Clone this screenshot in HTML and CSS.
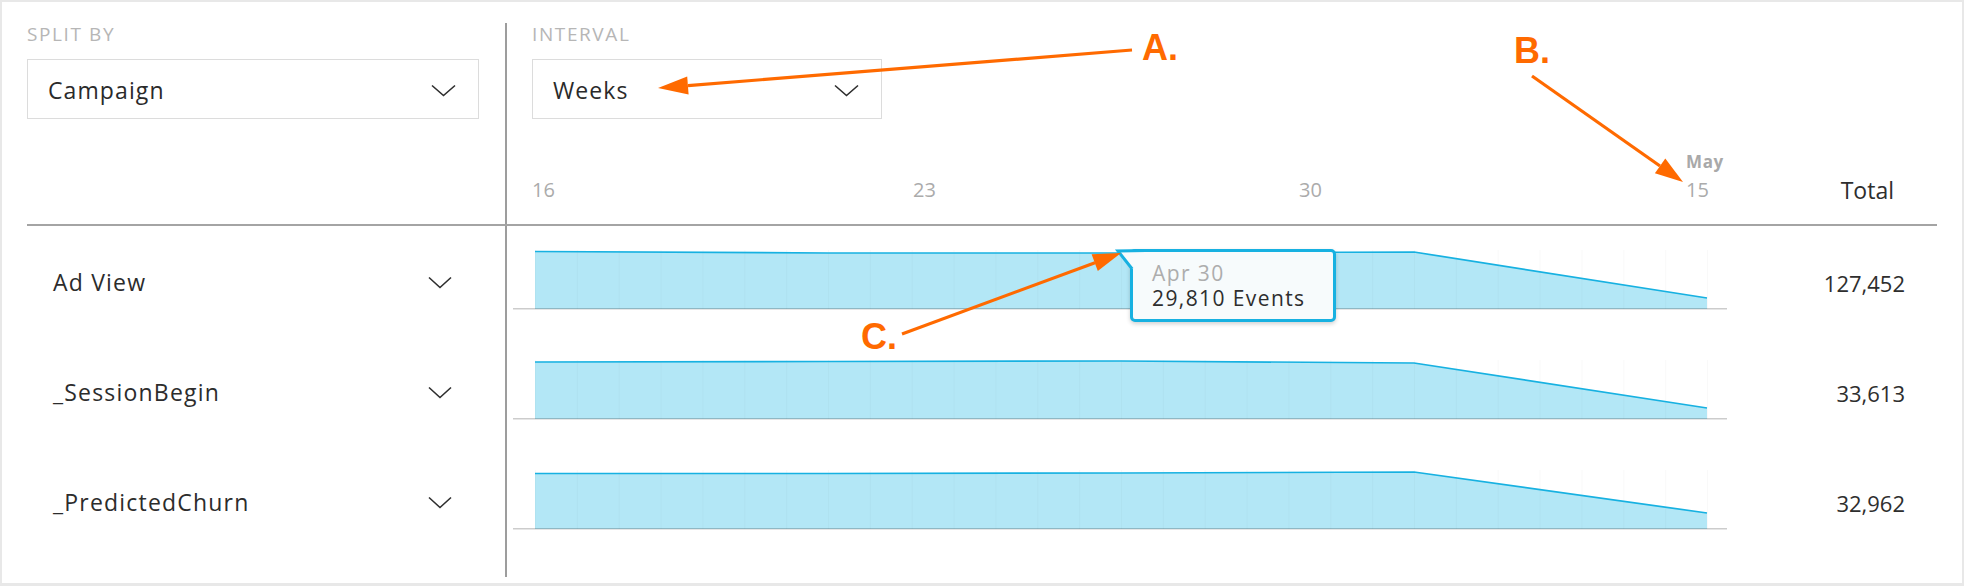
FILE: index.html
```html
<!DOCTYPE html>
<html>
<head>
<meta charset="utf-8">
<link rel="stylesheet" href="styles.css">
</head>
<body>
<div class="page">
  <div class="board">
    <div class="head">
      <div class="head-left">
        <div class="field-label">SPLIT BY</div>
        <div class="select split">
          <span>Campaign</span>
          <svg class="chev" width="25" height="13" viewBox="0 0 25 13"><polyline points="1,1.5 12.5,11.5 24,1.5"/></svg>
        </div>
      </div>
      <div class="head-right">
        <div class="field-label">INTERVAL</div>
        <div class="select interval">
          <span>Weeks</span>
          <svg class="chev" width="25" height="13" viewBox="0 0 25 13"><polyline points="1,1.5 12.5,11.5 24,1.5"/></svg>
        </div>
        <div class="axis">
          <span class="tick">16</span>
          <span class="tick">23</span>
          <span class="tick">30</span>
          <span class="tick"><span class="month">May</span>15</span>
          <span class="total-head">Total</span>
        </div>
      </div>
    </div>

    <div class="body">
      <div class="label-cell">
        <span>Ad View</span>
        <svg class="chev" width="24" height="13" viewBox="0 0 24 13"><polyline points="1,1.5 12,11.5 23,1.5"/></svg>
      </div>
      <div class="chart-cell">
        <svg class="spark" width="1214" height="60" viewBox="0 0 1214 60">
          <defs><pattern id="g1" x="22" y="0" width="41.857" height="60" patternUnits="userSpaceOnUse"><line x1="0.5" y1="0" x2="0.5" y2="60" class="grid"/></pattern></defs>
          <path class="area" d="M22,59 L22,1.5 L315,3 L608,3 L901,2 L1194,48 L1194,59 Z"/>
          <rect x="22" y="0" width="1174" height="59" fill="url(#g1)"/>
          <polyline class="line" points="22,1.5 315,3 608,3 901,2 1194,48"/>
          <line class="base" x1="0" y1="58.8" x2="1214" y2="58.8"/>
        </svg>
        <span class="total">127,452</span>
      </div>

      <div class="label-cell">
        <span>_SessionBegin</span>
        <svg class="chev" width="24" height="13" viewBox="0 0 24 13"><polyline points="1,1.5 12,11.5 23,1.5"/></svg>
      </div>
      <div class="chart-cell">
        <svg class="spark" width="1214" height="60" viewBox="0 0 1214 60">
          <defs><pattern id="g2" x="22" y="0" width="41.857" height="60" patternUnits="userSpaceOnUse"><line x1="0.5" y1="0" x2="0.5" y2="60" class="grid"/></pattern></defs>
          <path class="area" d="M22,59 L22,2 L315,1.5 L608,1 L901,3 L1194,48 L1194,59 Z"/>
          <rect x="22" y="0" width="1174" height="59" fill="url(#g2)"/>
          <polyline class="line" points="22,2 315,1.5 608,1 901,3 1194,48"/>
          <line class="base" x1="0" y1="58.8" x2="1214" y2="58.8"/>
        </svg>
        <span class="total">33,613</span>
      </div>

      <div class="label-cell">
        <span>_PredictedChurn</span>
        <svg class="chev" width="24" height="13" viewBox="0 0 24 13"><polyline points="1,1.5 12,11.5 23,1.5"/></svg>
      </div>
      <div class="chart-cell">
        <svg class="spark" width="1214" height="60" viewBox="0 0 1214 60">
          <defs><pattern id="g3" x="22" y="0" width="41.857" height="60" patternUnits="userSpaceOnUse"><line x1="0.5" y1="0" x2="0.5" y2="60" class="grid"/></pattern></defs>
          <path class="area" d="M22,59 L22,3.5 L315,3.5 L608,3 L901,2 L1194,43 L1194,59 Z"/>
          <rect x="22" y="0" width="1174" height="59" fill="url(#g3)"/>
          <polyline class="line" points="22,3.5 315,3.5 608,3 901,2 1194,43"/>
          <line class="base" x1="0" y1="58.8" x2="1214" y2="58.8"/>
        </svg>
        <span class="total">32,962</span>
      </div>

      <div class="label-cell spacer"></div>
      <div class="spacer"></div>
    </div>
  </div>

  <div class="overlay">
    <div class="tooltip">
      <div class="tip-date">Apr 30</div>
      <div class="tip-value">29,810 Events</div>
    </div>
    <svg class="notes" width="1964" height="586" viewBox="0 0 1964 586">
      <polygon class="tail-fill" points="1118.5,251.5 1146,251.5 1146,269 1132,269"/>
      <polyline class="tail-line" points="1146,250.6 1118,251 1132.2,269"/>

      <line class="arrow" x1="1132" y1="50" x2="688" y2="85.6"/>
      <polygon class="arrow-head" points="658,88 687.2,76.6 688.6,94.6"/>
      <line class="arrow" x1="1532" y1="76" x2="1660" y2="166"/>
      <polygon class="arrow-head" points="1683,182 1654.9,173.3 1665.3,158.5"/>
      <line class="arrow" x1="902" y1="334" x2="1095" y2="262.7"/>
      <polygon class="arrow-head" points="1121,253 1097.8,271.1 1091.6,254.3"/>

      <text class="note" x="1142" y="60">A.</text>
      <text class="note" x="1514" y="63">B.</text>
      <text class="note" x="861" y="349">C.</text>
    </svg>
  </div>
</div>
</body>
</html>
```

FILE: styles.css
```css
html, body {
  margin: 0;
  padding: 0;
  background: #ffffff;
}

body {
  font-family: "Open Sans", "Noto Sans", sans-serif;
  color: #2f2f2f;
}

.page {
  position: relative;
  width: 1964px;
  height: 586px;
  box-sizing: border-box;
  border: 2px solid #e8e8e8;
  border-bottom-width: 3px;
  background: #ffffff;
  overflow: hidden;
}

.board {
  margin: 21px 0 0 25px;
  width: 1910px;
}

/* ---------- header ---------- */
.head {
  display: grid;
  grid-template-columns: 480px 1fr;
  height: 201px;
  border-bottom: 2px solid #a4a4a4;
}

.head-left {
  border-right: 2px solid #9d9d9d;
  padding-right: 26px;
}

.head-right {
  display: flex;
  flex-direction: column;
  padding-left: 25px;
}

.field-label {
  font-size: 19px;
  line-height: 22px;
  color: #b6b6b6;
  letter-spacing: 1.6px;
  margin-bottom: 14px;
}

.select {
  display: flex;
  align-items: center;
  justify-content: space-between;
  box-sizing: border-box;
  height: 60px;
  border: 1.5px solid #dcdcdc;
  padding: 2px 22px 0 20px;
  font-size: 23px;
  line-height: 28px;
  letter-spacing: 1.1px;
  color: #2a2a2a;
}

.select.interval {
  width: 350px;
}

.chev polyline {
  fill: none;
  stroke: #2e2e2e;
  stroke-width: 1.6;
}

.axis {
  margin-top: auto;
  display: grid;
  grid-template-columns: 381px 386px 387px 1fr auto;
  align-items: end;
  padding-bottom: 22px;
  font-size: 20px;
  line-height: 24px;
  color: #ababab;
}

.month {
  display: block;
  font-size: 17px;
  line-height: 20px;
  font-weight: 700;
  letter-spacing: 0.6px;
  color: #a9a9a9;
  margin-bottom: 6px;
}

.total-head {
  font-size: 23px;
  color: #2e2e2e;
  padding-right: 43px;
}

/* ---------- rows ---------- */
.body {
  display: grid;
  grid-template-columns: 480px 1fr;
  grid-auto-rows: 110px;
}

.label-cell {
  display: flex;
  align-items: center;
  justify-content: space-between;
  border-right: 2px solid #9d9d9d;
  padding: 1px 53px 0 26px;
  font-size: 23px;
  line-height: 28px;
  letter-spacing: 1.2px;
  color: #2c2c2c;
}

.label-cell .chev {
  margin-top: 1px;
}

.label-cell.spacer,
.spacer {
  height: 20px;
}

.chart-cell {
  display: flex;
  align-items: flex-start;
  padding-left: 6px;
}

.spark {
  display: block;
  margin-top: 24px;
  flex: none;
}

.spark .area {
  fill: #b3e7f6;
}

.spark .grid {
  stroke: rgba(0, 0, 0, 0.022);
  stroke-width: 1;
}

.spark .line {
  fill: none;
  stroke: #17b1e1;
  stroke-width: 1.7;
  stroke-linejoin: round;
}

.spark .base {
  stroke: rgba(0, 0, 0, 0.2);
  stroke-width: 1.6;
}

.total {
  flex: 1;
  align-self: center;
  text-align: right;
  padding: 3px 32px 0 0;
  font-size: 22px;
  line-height: 28px;
  color: #2e2e2e;
}

/* ---------- overlay: tooltip + annotations ---------- */
.overlay {
  position: absolute;
  left: -2px;
  top: -2px;
  width: 1964px;
  height: 586px;
  pointer-events: none;
}

.tooltip {
  position: absolute;
  left: 1130px;
  top: 249px;
  width: 206px;
  height: 73px;
  box-sizing: border-box;
  border: 3px solid #17b1e1;
  border-radius: 5px;
  background: #f7fbfc;
  box-shadow: 0 2px 4px rgba(0, 0, 0, 0.18);
  padding: 9px 0 0 19px;
  font-size: 21px;
  line-height: 25px;
  letter-spacing: 1.4px;
}

.tip-date {
  color: #adadad;
}

.tip-value {
  color: #2e2e2e;
  font-weight: 500;
}

.notes {
  position: absolute;
  left: 0;
  top: 0;
}

.tail-fill {
  fill: #f7fbfc;
}

.tail-line {
  fill: none;
  stroke: #17b1e1;
  stroke-width: 3;
  stroke-linejoin: miter;
}

.arrow {
  stroke: #ff6a00;
  stroke-width: 3.2;
}

.arrow-head {
  fill: #ff6a00;
}

.note {
  font-family: "Liberation Sans", Arial, sans-serif;
  font-weight: 700;
  font-size: 36px;
  fill: #ff6a00;
}
```
